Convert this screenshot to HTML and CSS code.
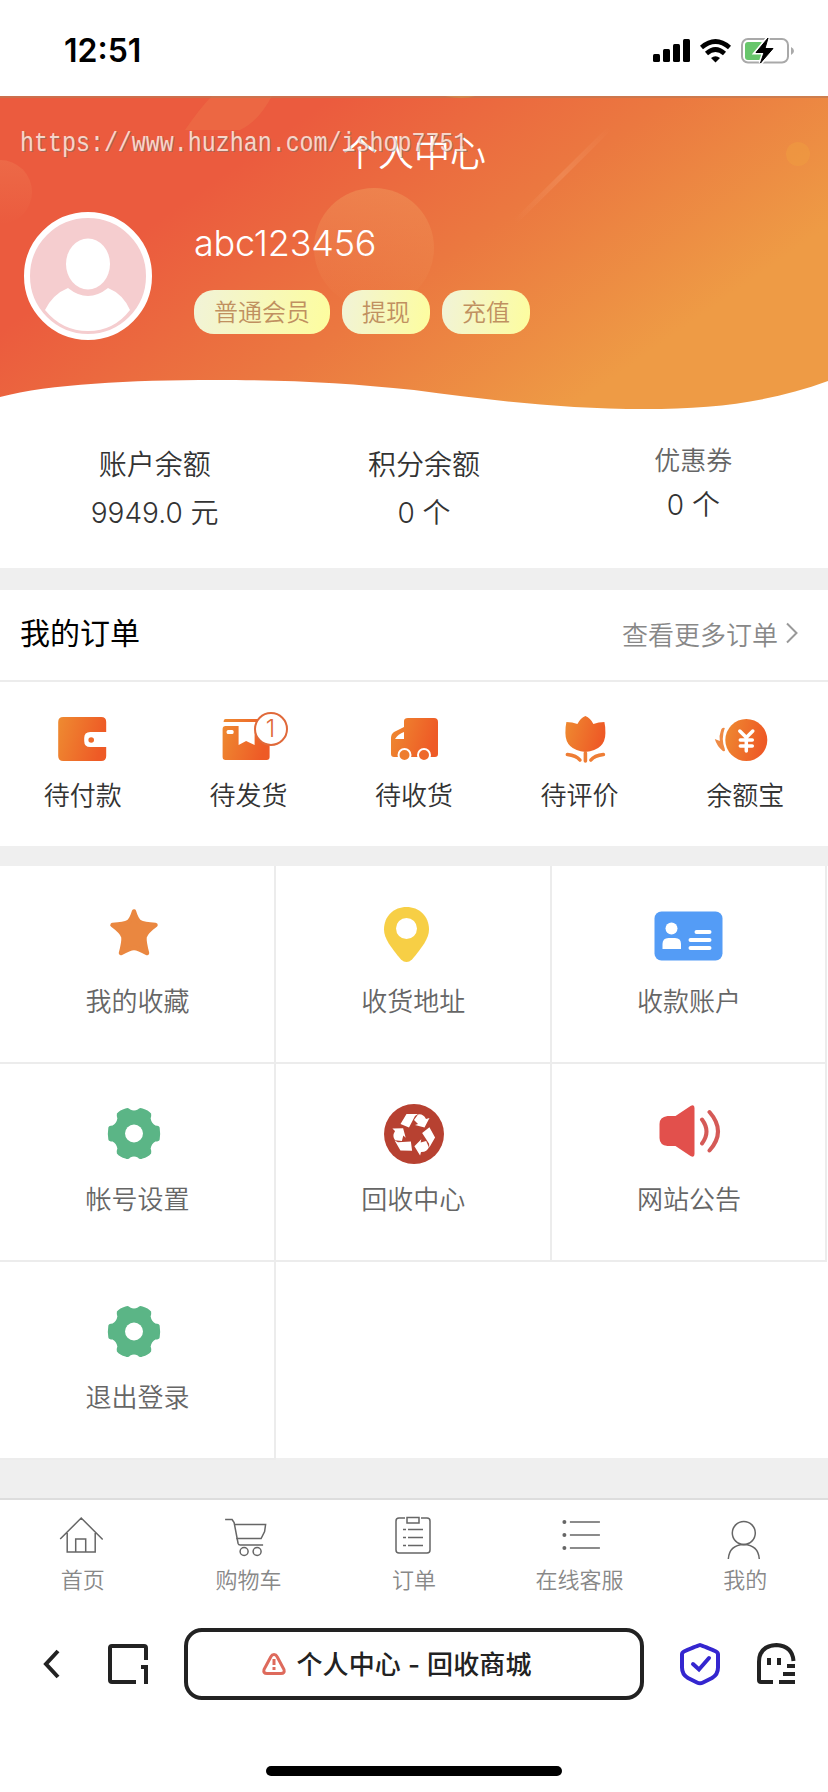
FILE: index.html
```html
<!DOCTYPE html>
<html lang="zh-CN">
<head>
<meta charset="utf-8">
<title>个人中心 - 回收商城</title>
<link rel="stylesheet" href="styles.css">
</head>
<body>
<svg class="defs" width="0" height="0">
  <defs>
    <linearGradient id="og" x1="0" y1="0" x2="1" y2="0.25"><stop offset="0" stop-color="#ee8b31"/><stop offset="1" stop-color="#ee5a26"/></linearGradient>
    <linearGradient id="bg" gradientUnits="userSpaceOnUse" x1="300" y1="120" x2="525" y2="440"><stop offset="0" stop-color="#eb5b3e"/><stop offset="0.5" stop-color="#eb7840"/><stop offset="1" stop-color="#ee9b45"/></linearGradient>
    <linearGradient id="orb" x1="0" y1="0" x2="0" y2="1"><stop offset="0" stop-color="#f09a5c" stop-opacity=".5"/><stop offset="1" stop-color="#f09a5c" stop-opacity="0"/></linearGradient>
    <linearGradient id="streak" gradientUnits="userSpaceOnUse" x1="515" y1="222" x2="610" y2="128"><stop offset="0" stop-color="#f4a070" stop-opacity="0"/><stop offset=".5" stop-color="#f4a070" stop-opacity=".35"/><stop offset="1" stop-color="#f4a070" stop-opacity="0"/></linearGradient>
    <linearGradient id="blob" x1="0" y1="0" x2="0" y2="1"><stop offset="0" stop-color="#f08a5c" stop-opacity=".3"/><stop offset="1" stop-color="#f08a5c" stop-opacity="0"/></linearGradient>
    <g id="gear">
      <path transform="scale(.95 1)" d="M-9-25q3-1.500 5 1q4 2 8 0q2-2.500 5-1q6 1.500 9 5q.5 3-.5 5q1 5 5 7q4 0 4.500 2q1 6 0 12q-.5 2-4.500 2q-4 2-5 7q1 2 .5 5q-3 3.500-9 5q-3 1.500-5-1q-4-2-8 0q-2 2.500-5 1q-6-1.500-9-5q-.5-3 .5-5q-1-5-5-7q-4 0-4.500-2q-1-6 0-12q.5-2 4.500-2q4-2 5-7q-1-2-.5-5q3-3.500 9-5z" fill="#5bb586"/>
      <circle r="9" fill="#fff"/>
    </g>
    <g id="arrowpart">
      <path d="M-13.500-10L-7.500-20H4L1-18l-6 11.500z"/>
      <path d="M0-14l4-5.500q5-1 8 4.500l3.500-1-5 9.500-9.500-2.500 3-1z"/>
    </g>
  </defs>
</svg>

<header class="status">
  <span class="clock">12:51</span>
  <svg width="142" height="28" viewBox="652 35 142 28">
    <rect x="653" y="53" width="7" height="8" rx="1.500"/><rect x="663" y="48" width="7" height="13" rx="1.500"/><rect x="673" y="43" width="7" height="18" rx="1.500"/><rect x="683" y="38" width="7" height="23" rx="1.500"/>
    <path d="M701.500 46.500q14-12 28 0M706.500 52.500q9-8 18 0" fill="none" stroke="#000" stroke-width="4.600"/>
    <path d="M711 57q4.500-3.500 9 0l-4.500 4.500z"/>
    <rect x="742" y="38" width="46" height="23.500" rx="6" fill="none" stroke="#a9a9a9" stroke-width="2"/>
    <path d="M748 41h12q3 0 3 3v12q0 3-3 3h-12q-3 0-3-3V44q0-3 3-3z" fill="#67c66b"/>
    <path d="M791 46q3 1.500 3 4t-3 4z" fill="#a9a9a9"/>
    <path d="M768 37l-12 14.500h8l-3.500 10.500 12.500-14.500h-8z" stroke="#fff" stroke-width="4"/>
    <path d="M768 37l-12 14.500h8l-3.500 10.500 12.500-14.500h-8z" stroke="#000"/>
  </svg>
</header>

<section class="banner">
  <svg class="banner-bg" width="828" height="316" viewBox="0 96 828 316">
    <path d="M0 96H828V381C770 402 715 409 645 409C560 409 490 400 414 390C345 383 290 380 215 380C130 380 50 384 0 397Z" fill="url(#bg)"/>
    <circle cx="374" cy="248" r="60" fill="url(#orb)"/>
    <circle cx="0" cy="192" r="32" fill="url(#blob)"/>
    <path d="M185 130Q200 108 212 96H272Q258 122 240 130Z" fill="#f09058" opacity=".22"/>
    <path d="M515 222L610 128" stroke="url(#streak)" stroke-width="5"/>
    <circle cx="798" cy="154" r="12" fill="#f0a040" opacity=".45"/>
    <path d="M445 96h30q-12 4-30 0z" fill="#f2a040"/>
    <path d="M0 97H828" stroke="#bd7a55" stroke-width="2" opacity=".65"/>
  </svg>
  <h1 class="title">个人中心</h1>
  <span class="watermark">https://www.huzhan.com/ishop7751</span>
  <div class="profile">
    <svg width="128" height="128" viewBox="-64 -64 128 128">
      <circle r="61" fill="#f5cdcf" stroke="#fff" stroke-width="6"/>
      <ellipse cy="-12" rx="22" ry="25.500" fill="#fff"/>
      <path d="M-43 34Q-35 18-20 12Q0 28 20 12Q35 18 42 34Q26 55 0 55T-43 34Z" fill="#fff"/>
    </svg>
    <div class="who">
      <div class="name">abc123456</div>
      <div class="pills"><span>普通会员</span><span>提现</span><span>充值</span></div>
    </div>
  </div>
</section>

<section class="stats">
  <div><p>账户余额</p><p>9949.0 元</p></div>
  <div><p>积分余额</p><p>0 个</p></div>
  <div><p class="minor">优惠券</p><p>0 个</p></div>
</section>

<section class="orders">
  <div class="orders-head">
    <h2>我的订单</h2>
    <a>查看更多订单<svg width="12" height="22" viewBox="0 0 12 22"><path d="M1 1.500l9.500 9.500L1 20.500" fill="none" stroke="#999" stroke-width="2"/></svg></a>
  </div>
  <div class="orders-row">
    <div><svg width="80" height="54" viewBox="42.800 711 80 54"><path d="M63 717h38q5 0 5 5v10H90q-6 0-6 6v3q0 6 6 6h16v9q0 5-5 5H63q-5 0-5-5v-34q0-5 5-5z" fill="url(#og)"/><circle cx="91" cy="740" r="2.800" fill="#ee6a2a"/></svg>待付款</div>
    <div><svg width="80" height="54" viewBox="208.400 711 80 54"><path d="M226 719h38v3h-40q0-3 2-3zM226 726h13v19l7.500-4 8.500 4v-19h15v31q0 3-3 3h-41q-3 0-3-3v-28q0-3 3-3z" fill="url(#og)"/><rect x="227" y="730" width="7" height="4" rx="1.500" fill="#fff"/></svg><b class="badge">1</b>待发货</div>
    <div><svg width="80" height="54" viewBox="374 711 80 54"><path d="M408 718h26q4 0 4 4v32q0 3-3 3H394q-3 0-3-3v-16q0-4 3-6l10-5v-6q0-3 4-3z" fill="url(#og)"/><path d="M395 739q3-5 9-7v7z" fill="#fff"/><circle cx="404.500" cy="755" r="6" fill="#ee7d2e" stroke="#fff" stroke-width="2"/><circle cx="424" cy="755" r="6" fill="#ee682a" stroke="#fff" stroke-width="2"/></svg>待收货</div>
    <div><svg width="80" height="54" viewBox="539.600 711 80 54"><path d="M566 722q6 0 11 2 3-6 8-8 5 2 8 8 5-2 11-2 1 4 1 11 0 17-20 19-20-2-20-19 0-7 1-11z" fill="url(#og)"/><path d="M585 753v8M567 754.500q9 1 12.500 5.500M603 754.500q-9 1-12.500 5.500" fill="none" stroke="#fff" stroke-width="6"/><path d="M585 753v8M567 754.500q9 1 12.500 5.500M603 754.500q-9 1-12.500 5.500" fill="none" stroke="#ee7d35" stroke-width="3.600" stroke-linecap="round"/></svg>待评价</div>
    <div><svg width="80" height="54" viewBox="705.200 711 80 54"><circle cx="746.500" cy="740" r="21" fill="url(#og)"/><path d="M725 728q-3-1-4 3-2 5-1 10l-5-2q2 7 8 12 3 1 2-2-4-10 0-21z" fill="#ee8a45"/><path d="M740 731l6.500 6.500 6.500-6.500M746.500 737v14M740.500 740h12M740.500 746h12" stroke="#fff" stroke-width="3.500" fill="none" stroke-linecap="round"/></svg>余额宝</div>
  </div>
</section>

<section class="grid">
  <div class="cell"><svg width="80" height="64" viewBox="97 902 80 64"><path d="M134 911.500q2 7 5.500 10.500 4 2.500 16 3-9.500 7-11 12-.5 5 2.500 16-9-5-13-5t-13 5q3-11 2.500-16-1.500-5-11-12 12-.5 16-3 3.500-3.500 5.500-10.500z" fill="#ea8740" stroke="#ea8740" stroke-width="4.500" stroke-linejoin="round"/></svg>我的收藏</div>
  <div class="cell"><svg width="80" height="64" viewBox="373 902 80 64"><path d="M406.500 907c12.500 0 22.500 9 22.500 22.500 0 9-7 18-17 30q-5.500 5-11 0c-10-12-17-21-17-30 0-13.500 10-22.500 22.500-22.500z" fill="#f7cf45"/><circle cx="406.500" cy="928.500" r="10.500" fill="#fff"/></svg>收货地址</div>
  <div class="cell"><svg width="80" height="64" viewBox="648.500 902 80 64"><rect x="654" y="911.500" width="68" height="49" rx="7" fill="#549cf6"/><circle cx="671" cy="928.500" r="6" fill="#fff"/><path d="M662 949v-5q0-6 6-6h6.500q6 0 6 6v5z" fill="#fff"/><path d="M696 932h13M690 940h19M690 948h19" stroke="#fff" stroke-width="4" stroke-linecap="round"/></svg>收款账户</div>
  <div class="cell"><svg width="80" height="64" viewBox="97 1100 80 64"><use href="#gear" x="134" y="1133.500"/></svg>帐号设置</div>
  <div class="cell"><svg width="80" height="64" viewBox="373 1100 80 64"><circle cx="414" cy="1134" r="30" fill="#b74131"/><g transform="translate(414 1134)" fill="#fff"><use href="#arrowpart"/><use href="#arrowpart" transform="rotate(120)"/><use href="#arrowpart" transform="rotate(240)"/></g></svg>回收中心</div>
  <div class="cell"><svg width="80" height="64" viewBox="648.500 1100 80 64"><path d="M667 1116h8l15-10q4-2 4 2v46q0 4-4 2l-15-10h-8q-8-1-8-8v-14q0-7 8-8z" fill="#e2504c"/><path d="M701.500 1119.500q9 12 0 24M709 1112q17 19.500 0 38.500" fill="none" stroke="#d55a57" stroke-width="4" stroke-linecap="round"/></svg>网站公告</div>
  <div class="cell"><svg width="80" height="64" viewBox="97 1298 80 64"><use href="#gear" x="134" y="1331.500"/></svg>退出登录</div>
</section>

<nav class="tabs">
  <div><svg width="60" height="48" viewBox="52.800 1514 60 48"><path d="M60 1539l21-21 21.500 21.500M67 1533v19h28v-19M75.500 1552v-13h10v13"/></svg>首页</div>
  <div><svg width="60" height="48" viewBox="218.400 1514 60 48"><path d="M225.500 1519.500h7l2 3 4 21q.5 1.500 2 1.500h23M235.500 1524.500h30.500l-1 7-3.500 7h-25"/><circle cx="244.500" cy="1551.500" r="4"/><circle cx="257.500" cy="1551.500" r="4"/></svg>购物车</div>
  <div><svg width="60" height="48" viewBox="384 1514 60 48"><path d="M405 1518h-6q-3 0-3 3v29q0 3 3 3h28q3 0 3-3v-29q0-3-3-3h-6M407 1517.500h12v5.500h-12zM403 1529.500h3M408 1529.500h15M403 1537.500h3M408 1537.500h15M403 1545.500h3M408 1545.500h15"/></svg>订单</div>
  <div><svg width="60" height="48" viewBox="549.600 1514 60 48"><path d="M569.500 1522h30M569.500 1535h30M569.500 1548h30"/><g fill="#666" stroke="none"><circle cx="564" cy="1522" r="2"/><circle cx="564" cy="1535" r="2"/><circle cx="564" cy="1548" r="2"/></g></svg>在线客服</div>
  <div><svg width="60" height="48" viewBox="715.200 1514 60 48"><circle cx="744" cy="1533" r="11.500"/><path d="M728.500 1559q1-14 15.500-14.500 14.500.5 15.500 14.500"/></svg>我的</div>
</nav>

<footer class="browser">
  <svg class="back" width="18" height="32" viewBox="43 1647 18 32"><path d="M58 1650l-12 13 12 13" fill="none" stroke="#222" stroke-width="4"/></svg>
  <svg class="pages" width="42" height="42" viewBox="107 1643 42 42"><path d="M136 1682h-24q-2 0-2-2v-32q0-2 2-2h32q2 0 2 2v12M141 1667h5v17" fill="none" stroke="#222" stroke-width="4"/></svg>
  <div class="address"><svg width="26" height="24" viewBox="260 1652 26 24"><path d="M273 1654.500q2 0 3 2l7 13q1 4-3 4h-14q-4 0-3-4l7-13q1-2 3-2z" fill="none" stroke="#de6a5c" stroke-width="3"/><path d="M273 1659v6M273 1667v3" stroke="#de6a5c" stroke-width="3"/></svg><span>个人中心 - 回收商城</span></div>
  <svg class="shield" width="42" height="44" viewBox="679 1642 42 44"><path d="M700 1645q1 0 16 6.500 2 1 2 3v13q0 7-6 10.500l-9 4.500q-3 1.500-6 0l-9-4.500q-6-3.500-6-10.500v-13q0-2 2-3 15-6.500 16-6.500z" fill="none" stroke="#3426cf" stroke-width="4"/><path d="M693 1664l6 5.500 10-11.500" fill="none" stroke="#3426cf" stroke-width="4" stroke-linecap="round"/></svg>
  <svg class="ghost" width="42" height="44" viewBox="756 1642 42 44"><path d="M773 1682h-12q-2 0-2-2v-18q0-16 17.500-17 16 1 17 16M769 1658v7M779 1658v7M787 1666h8M783 1674h12M779 1682h16" fill="none" stroke="#222" stroke-width="4"/></svg>
</footer>
<div class="home-bar"></div>
</body>
</html>
```
FILE: styles.css
```css
* { box-sizing: border-box; margin: 0; padding: 0; }

body {
  width: 828px;
  height: 1792px;
  display: flex;
  flex-direction: column;
  overflow: hidden;
  background: #fff;
  color: #333;
  font-family: Inter, "Noto Sans CJK SC", sans-serif;
  font-weight: 350;
}

svg { display: block; flex: none; }
.defs { position: absolute; }

.status {
  flex: none;
  height: 96px;
  padding: 36px 34px 0 64px;
  display: flex;
  justify-content: space-between;
  align-items: flex-start;
}
.clock { color: #000; font-size: 32px; line-height: 30px; font-weight: 600; }

.banner {
  position: relative;
  flex: none;
  height: 345px;
  color: #fff;
}
.banner-bg { position: absolute; left: 0; top: 0; }
.title {
  position: relative;
  padding-top: 34px;
  font-size: 36px;
  line-height: 48px;
  font-weight: 350;
  text-align: center;
}
.watermark {
  position: absolute;
  left: 20px;
  top: 33px;
  font: 23.3px/30px "Liberation Mono", monospace;
  transform: scaleY(1.15);
  color: rgba(255, 235, 225, .85);
  text-shadow: 1px 1px 0 rgba(110, 110, 110, .55);
}
.profile {
  position: relative;
  display: flex;
  gap: 42px;
  padding: 34px 0 0 24px;
}
.who { padding-top: 4px; }
.name { font-size: 36px; line-height: 48px; padding-top: 3px; font-weight: 300; letter-spacing: -.2px; }
.pills { display: flex; gap: 12px; margin-top: 23px; }
.pills span {
  height: 44px;
  padding: 0 20px;
  border-radius: 20px;
  background: linear-gradient(100deg, #f1f3d8, #fdfd9e);
  color: #c09060;
  font-size: 24px;
  line-height: 45px;
}

.stats {
  flex: none;
  height: 127px;
  padding: 0 0 0 20px;
  display: grid;
  grid-template-columns: repeat(3, 1fr);
  text-align: center;
}
.stats p { font-size: 28px; line-height: 48px; }
.stats .minor { font-size: 26px; line-height: 40px; color: #666; }

.orders {
  flex: none;
  height: 298px;
  border: solid #efefef;
  border-width: 22px 0 20px;
}
.orders-head {
  height: 92px;
  padding: 0 30px 4px 20px;
  border-bottom: 2px solid #ececec;
  display: flex;
  justify-content: space-between;
  align-items: center;
}
.orders-head h2 { color: #000; font-size: 30px; font-weight: 400; line-height: 40px; }
.orders-head a { display: flex; align-items: center; gap: 8px; color: #888; font-size: 26px; }
.orders-row { display: grid; grid-template-columns: repeat(5, 1fr); padding-top: 29px; }
.orders-row > div {
  position: relative;
  display: flex;
  flex-direction: column;
  align-items: center;
  gap: 12px;
  font-size: 26px;
  line-height: 38px;
}
.badge {
  position: absolute;
  left: 88px;
  top: 1px;
  width: 34px;
  height: 34px;
  border: 2px solid #e0693a;
  border-radius: 50%;
  background: #fff;
  color: #e0693a;
  font-size: 24px;
  font-weight: 300;
  line-height: 30px;
  text-align: center;
}

.grid {
  flex: none;
  height: 632px;
  display: grid;
  grid-template-columns: repeat(3, 275.8px);
  grid-auto-rows: 198px;
  border-bottom: 40px solid #efefef;
}
.cell {
  display: flex;
  flex-direction: column;
  align-items: center;
  gap: 17px;
  padding: 36px 0 0 1px;
  border: solid #ececec;
  border-width: 0 2px 2px 0;
  color: #666;
  font-size: 26px;
  line-height: 38px;
}

.tabs {
  flex: none;
  height: 106px;
  border-top: 2px solid #ddd;
  padding-top: 14px;
  display: grid;
  grid-template-columns: repeat(5, 1fr);
  color: #888;
  font-size: 22px;
  line-height: 32px;
}
.tabs > div { display: flex; flex-direction: column; align-items: center; gap: 2px; }
.tabs svg { fill: none; stroke: #666; stroke-width: 1.5; }

.browser {
  flex: none;
  height: 120px;
  padding: 0 30px 0 43px;
  display: flex;
  align-items: center;
}
.pages { margin-left: 46px; }
.address {
  width: 460px;
  height: 72px;
  margin: 0 35px;
  border: 4px solid #222;
  border-radius: 18px;
  display: flex;
  justify-content: center;
  align-items: center;
  gap: 10px;
  padding-right: 36px;
  color: #222;
  font-size: 26px;
  font-weight: 500;
}
.address span { padding-bottom: 3px; letter-spacing: .1px; }
.ghost { margin-left: 35px; }
.home-bar {
  flex: none;
  width: 296px;
  height: 10px;
  margin: 42px auto 0;
  border-radius: 5px;
  background: #000;
}
```
